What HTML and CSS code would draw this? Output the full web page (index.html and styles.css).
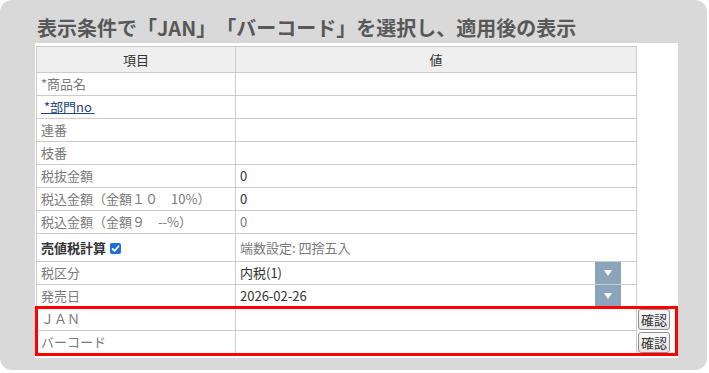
FILE: index.html
```html
<!DOCTYPE html>
<html lang="ja">
<head>
<meta charset="utf-8">
<title>表示条件</title>
<link rel="stylesheet" href="styles.css">
</head>
<body>
<div class="panel">
  <h1 class="title">表示条件で「JAN」「バーコード」を選択し、適用後の表示</h1>
  <div class="sheet">
    <div class="grid">
      <div class="c1 head">項目</div><div class="c2 head">値</div><div class="c3 c3head"></div>

      <div class="c1">*商品名</div><div class="c2"></div><div class="c3"></div>
      <div class="c1"><a class="link">&nbsp;*部門no&nbsp;</a></div><div class="c2"></div><div class="c3"></div>
      <div class="c1">連番</div><div class="c2"></div><div class="c3"></div>
      <div class="c1">枝番</div><div class="c2"></div><div class="c3"></div>
      <div class="c1">税抜金額</div><div class="c2 dark">0</div><div class="c3"></div>
      <div class="c1">税込金額（金額１０　10%）</div><div class="c2 dark">0</div><div class="c3"></div>
      <div class="c1">税込金額（金額９　--%）</div><div class="c2">0</div><div class="c3"></div>

      <div class="c1 tall strong">売値税計算<svg class="check" width="11" height="11" viewBox="0 0 11 11"><rect width="11" height="11" rx="2" fill="#1b6fd6"/><path d="M2.5 5.8 L4.6 7.9 L8.6 3.2" fill="none" stroke="#fff" stroke-width="1.7" stroke-linecap="round" stroke-linejoin="round"/></svg></div><div class="c2 tall">端数設定: 四捨五入</div><div class="c3 tall"></div>

      <div class="c1">税区分</div><div class="c2 dark sel"><span class="selval">内税(1)</span><span class="arrow"><svg width="8" height="6" viewBox="0 0 8 6"><path d="M0 0 H8 L4 6 Z" fill="#fff"/></svg></span></div><div class="c3"></div>
      <div class="c1">発売日</div><div class="c2 dark sel"><span class="selval">2026-02-26</span><span class="arrow"><svg width="8" height="6" viewBox="0 0 8 6"><path d="M0 0 H8 L4 6 Z" fill="#fff"/></svg></span></div><div class="c3"></div>

      <div class="c1">ＪＡＮ</div><div class="c2"></div><div class="c3"><button class="btn">確認</button></div>
      <div class="c1">バーコード</div><div class="c2"></div><div class="c3"><button class="btn">確認</button></div>
    </div>
    <div class="hl"></div>
  </div>
</div>
</body>
</html>
```

FILE: styles.css
```css
html, body {
  margin: 0;
  padding: 0;
  background: #ffffff;
}

.panel {
  width: 707px;
  height: 370px;
  background: #d9d9d9;
  border-radius: 12px;
  padding: 16px 0 0 35px;
  box-sizing: border-box;
  font-family: "Noto Sans CJK JP", "Noto Sans", sans-serif;
  text-spacing-trim: space-all;
}

.title {
  margin: 0 0 3px 2px;
  font-size: 20px;
  line-height: 24px;
  font-weight: bold;
  color: #585858;
  white-space: nowrap;
  text-spacing-trim: space-all;
}

.sheet {
  position: relative;
  width: 643px;
  background: #ffffff;
  padding: 3px 0 4px 1px;
  box-sizing: border-box;
}

.grid {
  display: grid;
  grid-template-columns: 200px 401px 36px;
  font-size: 13px;
  line-height: 22px;
  color: #7a7a7a;
}

.c1, .c2 {
  height: 23px;
  box-sizing: border-box;
  border-bottom: 1px solid #cccccc;
  border-right: 1px solid #cccccc;
  padding-left: 4px;
  white-space: nowrap;
}

.c1 {
  border-left: 1px solid #cccccc;
}

.c3 {
  height: 23px;
  box-sizing: border-box;
  padding-left: 1px;
}

.head {
  height: 27px;
  border-top: 1px solid #cccccc;
  background: #efefef;
  color: #333333;
  text-align: center;
  padding-left: 0;
  line-height: 25px;
}

.c3head {
  height: 27px;
}

.tall {
  height: 28px;
  line-height: 27px;
}

.strong {
  font-weight: bold;
  color: #333333;
  display: flex;
  align-items: center;
}

.check {
  margin-left: 4px;
  margin-top: 1px;
}

.dark {
  color: #333333;
}

.link {
  color: #22467c;
  text-decoration: underline;
}

.sel {
  display: flex;
  align-items: stretch;
}

.selval {
  flex: 1;
}

.arrow {
  width: 26px;
  margin-right: 15px;
  background: #8aa4bb;
  display: flex;
  align-items: center;
  justify-content: center;
}

.btn {
  display: block;
  margin-top: 1px;
  height: 21px;
  padding: 0 2px;
  font-family: "Noto Sans CJK JP", sans-serif;
  font-size: 13px;
  line-height: 19px;
  color: #333333;
  border: 1px solid #8f8f8f;
  border-radius: 3px;
  background: linear-gradient(#fafafa, #e4e4e4);
}

.hl {
  position: absolute;
  left: 0;
  top: 263px;
  width: 643px;
  height: 50px;
  border: 3px solid #ff0000;
  box-sizing: border-box;
  pointer-events: none;
}
```
